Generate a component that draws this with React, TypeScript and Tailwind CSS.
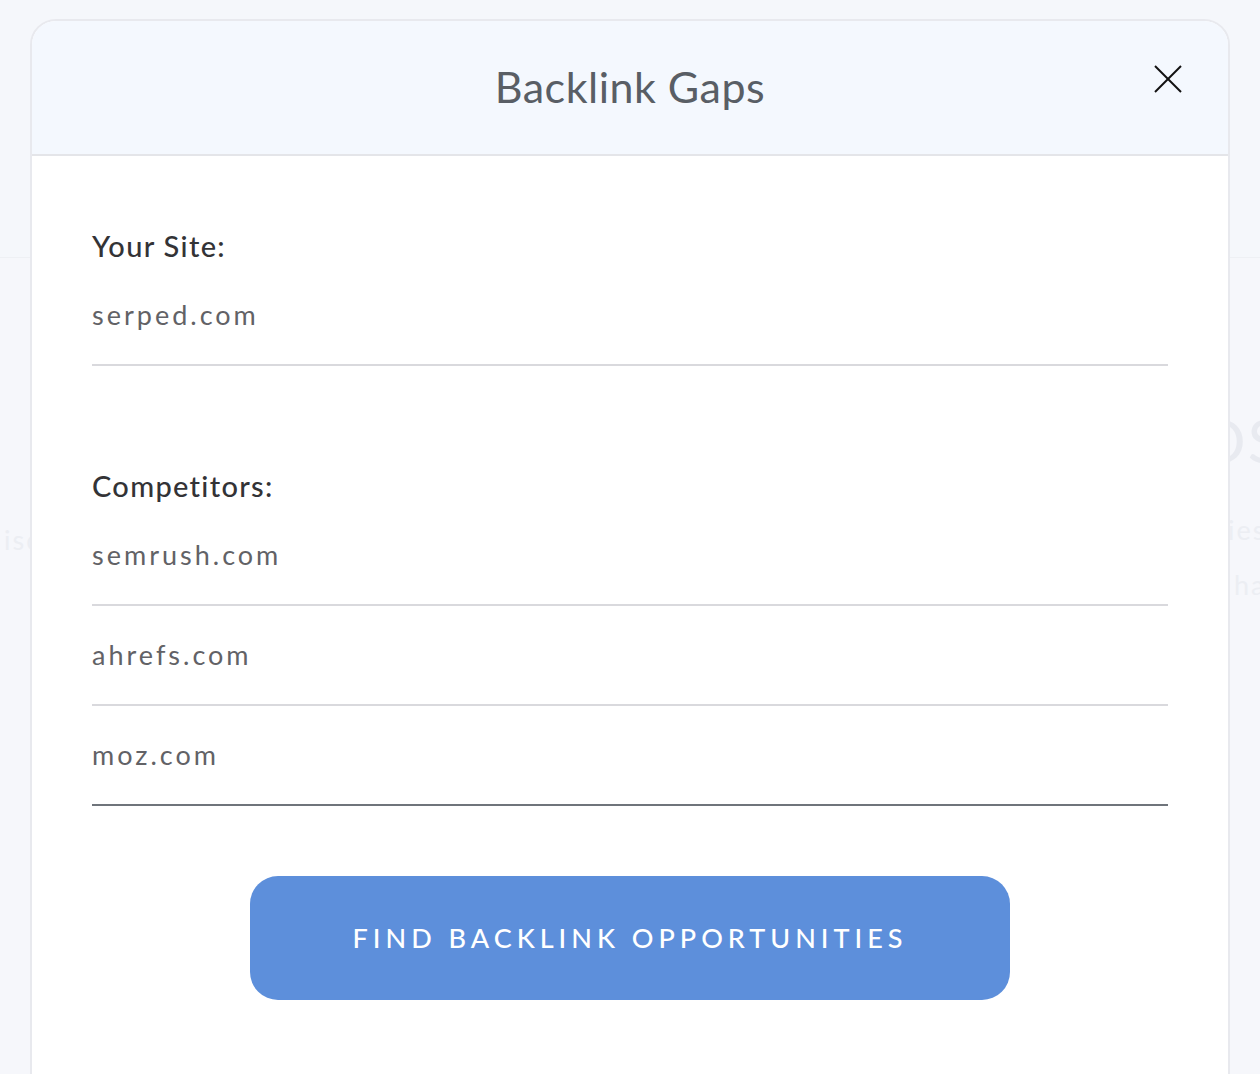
import React from 'react'

const font = { fontFamily: 'Lato, "Open Sans", "Liberation Sans", sans-serif' }

function UnderlineInput({ value, dark }: { value: string; dark?: boolean }) {
  return (
    <div
      className={`h-[100px] flex items-center border-b-2 ${dark ? 'border-[#6f747b]' : 'border-[#d9d9dd]'}`}
    >
      <input
        defaultValue={value}
        className="w-full bg-transparent outline-none text-[27px] tracking-[3px] text-[#626266] font-normal"
        style={font}
      />
    </div>
  )
}

export default function App() {
  return (
    <div className="relative h-[1074px] overflow-hidden bg-[#f6f7fb]" style={font}>
      {/* faded page behind the modal, only its edges peek out */}
      <div className="h-[258px] border-b border-[#eef0f4] bg-[#f5f7fb]" />
      <div className="flex justify-between">
        <div className="w-[30px] overflow-hidden pt-[262px]">
          <div className="whitespace-nowrap text-[27px] tracking-[2px] text-[#eceef3] ml-[4px]">isc</div>
        </div>
        <div className="w-[34px] overflow-hidden pt-[150px]">
          <div className="whitespace-nowrap text-[60px] tracking-[2px] text-[#e8eaf0] -ml-[26px] leading-[64px]">DS</div>
          <div className="mt-[38px] whitespace-nowrap text-[27px] tracking-[2px] text-[#eceef3] ml-[2px]">ies</div>
          <div className="mt-[14px] whitespace-nowrap text-[27px] tracking-[2px] text-[#eceef3] ml-[8px]">ha</div>
        </div>
      </div>

      {/* modal */}
      <div className="absolute left-[30px] top-[19px] w-[1200px] h-[1100px] bg-white border-2 border-[#e8e9ee] rounded-[26px] overflow-hidden">
        <div className="relative h-[135px] bg-[#f4f8fe] border-b-2 border-[#e4e5e9] flex items-center justify-center">
          <h1 className="text-[43px] text-[#595e65] font-normal tracking-[0.5px]">Backlink Gaps</h1>
          <button className="absolute right-[44px] top-[42px] w-[32px] h-[32px] flex items-center justify-center">
            <svg width="30" height="30" viewBox="0 0 30 30" fill="none" stroke="#111" strokeWidth="2">
              <line x1="2" y1="2" x2="28" y2="28" />
              <line x1="28" y1="2" x2="2" y2="28" />
            </svg>
          </button>
        </div>

        <div className="px-[60px] pt-[70px]">
          <label className="block h-[40px] leading-[40px] text-[29px] text-[#333336] font-medium tracking-[1.3px]">
            Your Site:
          </label>
          <UnderlineInput value="serped.com" />

          <label className="block mt-[100px] h-[40px] leading-[40px] text-[29px] text-[#333336] font-medium tracking-[1.3px]">
            Competitors:
          </label>
          <UnderlineInput value="semrush.com" />
          <UnderlineInput value="ahrefs.com" />
          <UnderlineInput value="moz.com" dark />

          <div className="mt-[70px] flex justify-center">
            <button className="w-[760px] h-[124px] rounded-[28px] bg-[#5d8fdb] text-white text-[27px] font-medium tracking-[5px]">
              FIND BACKLINK OPPORTUNITIES
            </button>
          </div>
        </div>
      </div>
    </div>
  )
}
